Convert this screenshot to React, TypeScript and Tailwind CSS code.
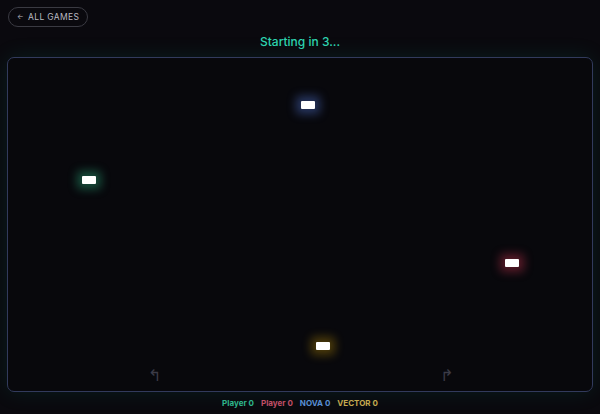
import React from "react";

const blobs = [
  { x: 74, y: 118, glow: "shadow-[0_0_10px_5px_rgba(52,211,153,0.35)]" },
  { x: 293, y: 43, glow: "shadow-[0_0_10px_5px_rgba(96,140,255,0.35)]" },
  { x: 497, y: 201, glow: "shadow-[0_0_10px_5px_rgba(244,63,94,0.35)]" },
  { x: 308, y: 284, glow: "shadow-[0_0_10px_5px_rgba(234,179,8,0.3)]" },
];

export default function App() {
  return (
    <div
      className="w-[600px] h-[414px] bg-[#0a090e] flex flex-col px-[7px] overflow-hidden"
      style={{ fontFamily: "Inter, 'Liberation Sans', sans-serif" }}
    >
      <div className="pt-[7px] flex">
        <button className="ml-[1px] h-[20px] px-[8px] rounded-full border border-[#3a3a42] text-[8.5px] tracking-[0.04em] text-[#b9b9c0] flex items-center gap-[4px]">
          <span className="text-[7px]">←</span>
          <span>ALL GAMES</span>
        </button>
      </div>
      <div className="h-[30px] flex items-center justify-center text-[12px] text-[#2ed3b0] font-medium">
        Starting in 3...
      </div>
      <div className="relative h-[335px] mt-0 rounded-[7px] border border-[#323a5c] bg-[#08080c] shadow-[0_0_22px_rgba(20,184,140,0.12)]">
        {blobs.map((b, i) => (
          <div
            key={i}
            className={`absolute w-[14px] h-[8px] bg-white rounded-[1px] ${b.glow}`}
            style={{ left: b.x, top: b.y }}
          />
        ))}
        <span className="absolute left-[140px] top-[306px] text-[16px] text-[#3b3b47]" style={{ fontFamily: "'DejaVu Sans', sans-serif" }}>↰</span>
        <span className="absolute left-[432px] top-[306px] text-[16px] text-[#3b3b47]" style={{ fontFamily: "'DejaVu Sans', sans-serif" }}>↱</span>
      </div>
      <div className="flex-1 flex items-center justify-center gap-[7px] text-[8px] font-bold">
        <span className="text-[#2fb58c]">Player 0</span>
        <span className="text-[#c44d66]">Player 0</span>
        <span className="text-[#5b8ed6]">NOVA 0</span>
        <span className="text-[#c9a94f]">VECTOR 0</span>
      </div>
    </div>
  );
}
